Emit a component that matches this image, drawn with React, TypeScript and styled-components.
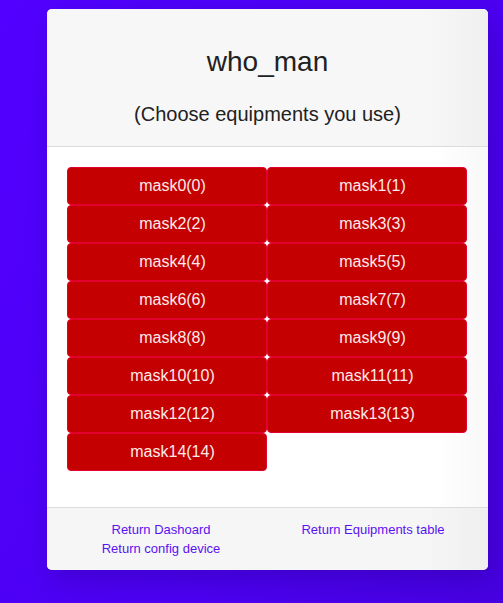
import React from "react";
import styled, { createGlobalStyle } from "styled-components";

const GlobalStyle = createGlobalStyle`
  html, body {
    margin: 0;
    padding: 0;
    height: 100%;
  }
  body {
    background: linear-gradient(120deg, #5200ff 0%, #4c00f2 60%, #4700e2 100%);
    font-family: "Liberation Sans", Arial, sans-serif;
    min-height: 603px;
  }
`;

const Page = styled.div`
  padding: 9px 15px 33px 47px;
  display: flex;
  justify-content: flex-start;
`;

const Card = styled.div`
  width: 441px;
  background: #fff;
  border-radius: 5px;
  overflow: hidden;
  box-shadow: 6px 10px 28px rgba(20, 0, 80, 0.22);
  display: flex;
  flex-direction: column;
`;

const Header = styled.div`
  background: linear-gradient(90deg, #f7f7f7 0%, #f7f7f7 85%, #f0f0f0 100%);
  border-bottom: 1px solid #dcdcdc;
  padding: 36px 20px 20px;
  display: flex;
  flex-direction: column;
  align-items: center;
  gap: 23px;
`;

const Title = styled.h1`
  margin: 0;
  font-size: 28px;
  line-height: 34px;
  font-weight: 400;
  color: #212121;
`;

const Subtitle = styled.h2`
  margin: 0;
  font-size: 20px;
  line-height: 24px;
  font-weight: 400;
  color: #212121;
`;

const Body = styled.div`
  background: linear-gradient(90deg, #ffffff 0%, #ffffff 88%, #f8f8f8 100%);
  padding: 20px 20px 36px;
`;

const Grid = styled.div`
  display: grid;
  grid-template-columns: 200px 200px;
`;

const MaskButton = styled.button`
  height: 38px;
  background: #c40000;
  border: 1px solid #e2002e;
  border-radius: 4px;
  color: #fbeaea;
  font-family: "Liberation Sans", Arial, sans-serif;
  font-size: 16px;
  padding: 0 0 0 11px;
  cursor: pointer;
`;

const Footer = styled.div`
  background: linear-gradient(90deg, #f6f6f6 0%, #f6f6f6 85%, #efefef 100%);
  border-top: 1px solid #dcdcdc;
  padding: 12px 9px 12px 8px;
  display: grid;
  grid-template-columns: 1fr 1fr;
`;

const LinkColumn = styled.div`
  display: flex;
  flex-direction: column;
  align-items: center;
`;

const FooterLink = styled.a`
  color: #5a12f2;
  font-size: 13px;
  line-height: 19px;
  text-decoration: none;
`;

const masks = Array.from({ length: 15 }, (_, i) => `mask${i}(${i})`);

export default function App() {
  return (
    <>
      <GlobalStyle />
      <Page>
        <Card>
          <Header>
            <Title>who_man</Title>
            <Subtitle>(Choose equipments you use)</Subtitle>
          </Header>
          <Body>
            <Grid>
              {masks.map((m) => (
                <MaskButton key={m}>{m}</MaskButton>
              ))}
            </Grid>
          </Body>
          <Footer>
            <LinkColumn>
              <FooterLink href="#">Return Dashoard</FooterLink>
              <FooterLink href="#">Return config device</FooterLink>
            </LinkColumn>
            <LinkColumn>
              <FooterLink href="#">Return Equipments table</FooterLink>
            </LinkColumn>
          </Footer>
        </Card>
      </Page>
    </>
  );
}
